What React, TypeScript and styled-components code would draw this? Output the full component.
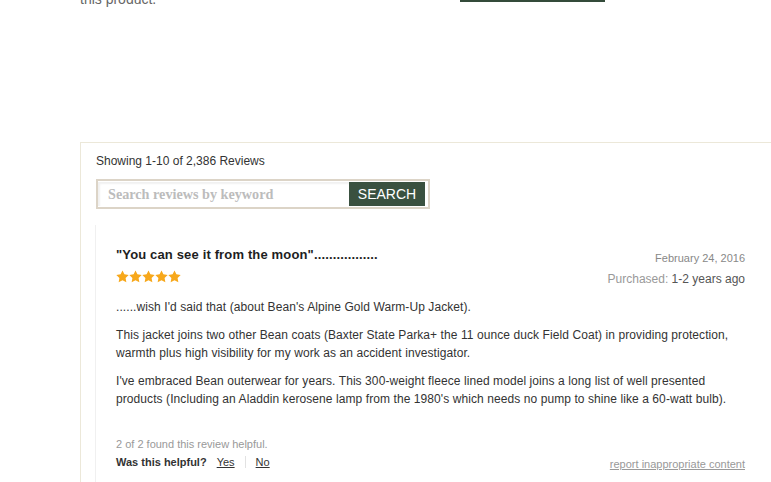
import React from "react";
import styled, { createGlobalStyle } from "styled-components";

const GlobalStyle = createGlobalStyle`
  html, body {
    margin: 0;
    padding: 0;
    overflow: hidden;
    background: #fff;
  }
  body {
    font-family: "Liberation Sans", Arial, sans-serif;
    width: 771px;
    height: 482px;
  }
`;

const Page = styled.div`
  display: flex;
  flex-direction: column;
  padding-left: 80px;
`;

const TopRow = styled.div`
  display: flex;
  align-items: flex-start;
  height: 36px;
  margin-top: -34px;
`;

const TopText = styled.p`
  margin: 24px 0 0;
  width: 380px;
  font-size: 14px;
  line-height: 18px;
  color: #666;
`;

const TopButton = styled.div`
  width: 145px;
  height: 36px;
  background: #344b3a;
`;

const ReviewsSection = styled.section`
  margin-top: 140px;
  border: 1px solid #ece8d9;
  border-right: none;
  border-bottom: none;
  padding: 10px 0 0 15px;
  display: flex;
  flex-direction: column;
`;

const Showing = styled.div`
  font-size: 12px;
  line-height: 16px;
  color: #333;
`;

const SearchBox = styled.form`
  margin-top: 10px;
  box-sizing: border-box;
  width: 334px;
  height: 30px;
  border: 2px solid #dcd4c7;
  padding: 1px 3px 1px 0;
  display: flex;
  align-items: stretch;
`;

const SearchInput = styled.input`
  flex: 1;
  min-width: 0;
  border: none;
  outline: none;
  padding: 0 0 0 10px;
  box-shadow: inset 2px 2px 2px rgba(0, 0, 0, 0.06);
  font-family: "Liberation Serif", "DejaVu Serif", serif;
  font-weight: bold;
  font-size: 14.2px;
  color: #333;
  &::placeholder {
    color: #bcbcbc;
  }
`;

const SearchButton = styled.button`
  width: 76px;
  border: none;
  background: #3a5140;
  color: #fff;
  font-family: "Liberation Sans", Arial, sans-serif;
  font-size: 14px;
  padding: 0;
  cursor: pointer;
`;

const ReviewCard = styled.article`
  margin-top: 16px;
  margin-left: -1px;
  border-left: 1px solid #f0f0f0;
  padding: 20px 26px 20px 20px;
  display: flex;
  flex-direction: column;
`;

const CardHeader = styled.div`
  display: flex;
  justify-content: space-between;
  align-items: flex-start;
`;

const HeaderLeft = styled.div`
  display: flex;
  flex-direction: column;
`;

const Title = styled.h3`
  margin: 2px 0 0;
  font-size: 13px;
  line-height: 16px;
  font-weight: bold;
  letter-spacing: 0.15px;
  color: #1e1e1e;
`;

const Stars = styled.div`
  margin-top: 7px;
  display: flex;
  height: 13px;
`;

const HeaderRight = styled.div`
  display: flex;
  flex-direction: column;
  align-items: flex-end;
  padding-top: 6px;
  gap: 6px;
`;

const DateText = styled.div`
  font-size: 11px;
  line-height: 14px;
  color: #888;
`;

const Purchased = styled.div`
  font-size: 12px;
  line-height: 16px;
  color: #999;
  span {
    color: #555;
  }
`;

const Body = styled.div`
  margin-top: 11px;
  display: flex;
  flex-direction: column;
  gap: 10px;
`;

const Para = styled.p`
  margin: 0;
  font-size: 12px;
  line-height: 18px;
  letter-spacing: 0.08px;
  color: #333;
`;

const Footer = styled.div`
  margin-top: 29px;
  display: flex;
  justify-content: space-between;
  align-items: flex-start;
`;

const FooterLeft = styled.div`
  display: flex;
  flex-direction: column;
  gap: 4px;
`;

const FoundHelpful = styled.div`
  font-size: 11px;
  line-height: 14px;
  color: #999;
`;

const HelpfulRow = styled.div`
  display: flex;
  align-items: center;
  font-size: 11px;
  line-height: 14px;
`;

const HelpfulLabel = styled.span`
  font-weight: bold;
  color: #333;
  margin-right: 10px;
`;

const VoteLink = styled.a`
  color: #333;
  text-decoration: underline;
  cursor: pointer;
`;

const Separator = styled.span`
  width: 1px;
  height: 12px;
  background: #e2e2e2;
  margin: 0 10px;
`;

const ReportLink = styled.a`
  margin-top: 20px;
  font-size: 11px;
  line-height: 14px;
  color: #999;
  text-decoration: underline;
  cursor: pointer;
`;

const Star = () => (
  <svg width="13" height="13" viewBox="0 0 24 24">
    <path
      d="M12 0.8l3.5 7.2 7.9 1.1-5.7 5.5 1.4 7.9L12 18.8l-7.1 3.7 1.4-7.9L.6 9.1l7.9-1.1z"
      fill="#f7a81b"
    />
  </svg>
);

export default function App() {
  return (
    <>
      <GlobalStyle />
      <Page>
        <TopRow>
          <TopText>this product.</TopText>
          <TopButton />
        </TopRow>
        <ReviewsSection>
          <Showing>Showing 1-10 of 2,386 Reviews</Showing>
          <SearchBox onSubmit={(e) => e.preventDefault()}>
            <SearchInput placeholder="Search reviews by keyword" />
            <SearchButton type="submit">SEARCH</SearchButton>
          </SearchBox>
          <ReviewCard>
            <CardHeader>
              <HeaderLeft>
                <Title>"You can see it from the moon".................</Title>
                <Stars>
                  <Star />
                  <Star />
                  <Star />
                  <Star />
                  <Star />
                </Stars>
              </HeaderLeft>
              <HeaderRight>
                <DateText>February 24, 2016</DateText>
                <Purchased>
                  Purchased: <span>1-2 years ago</span>
                </Purchased>
              </HeaderRight>
            </CardHeader>
            <Body>
              <Para>......wish I'd said that (about Bean's Alpine Gold Warm-Up Jacket).</Para>
              <Para>
                This jacket joins two other Bean coats (Baxter State Parka+ the 11 ounce duck Field Coat) in
                providing protection, warmth plus high visibility for my work as an accident investigator.
              </Para>
              <Para>
                I've embraced Bean outerwear for years. This 300-weight fleece lined model joins a long list of
                well presented products (Including an Aladdin kerosene lamp from the 1980's which needs no pump
                to shine like a 60-watt bulb).
              </Para>
            </Body>
            <Footer>
              <FooterLeft>
                <FoundHelpful>2 of 2 found this review helpful.</FoundHelpful>
                <HelpfulRow>
                  <HelpfulLabel>Was this helpful?</HelpfulLabel>
                  <VoteLink>Yes</VoteLink>
                  <Separator />
                  <VoteLink>No</VoteLink>
                </HelpfulRow>
              </FooterLeft>
              <ReportLink>report inappropriate content</ReportLink>
            </Footer>
          </ReviewCard>
        </ReviewsSection>
      </Page>
    </>
  );
}
